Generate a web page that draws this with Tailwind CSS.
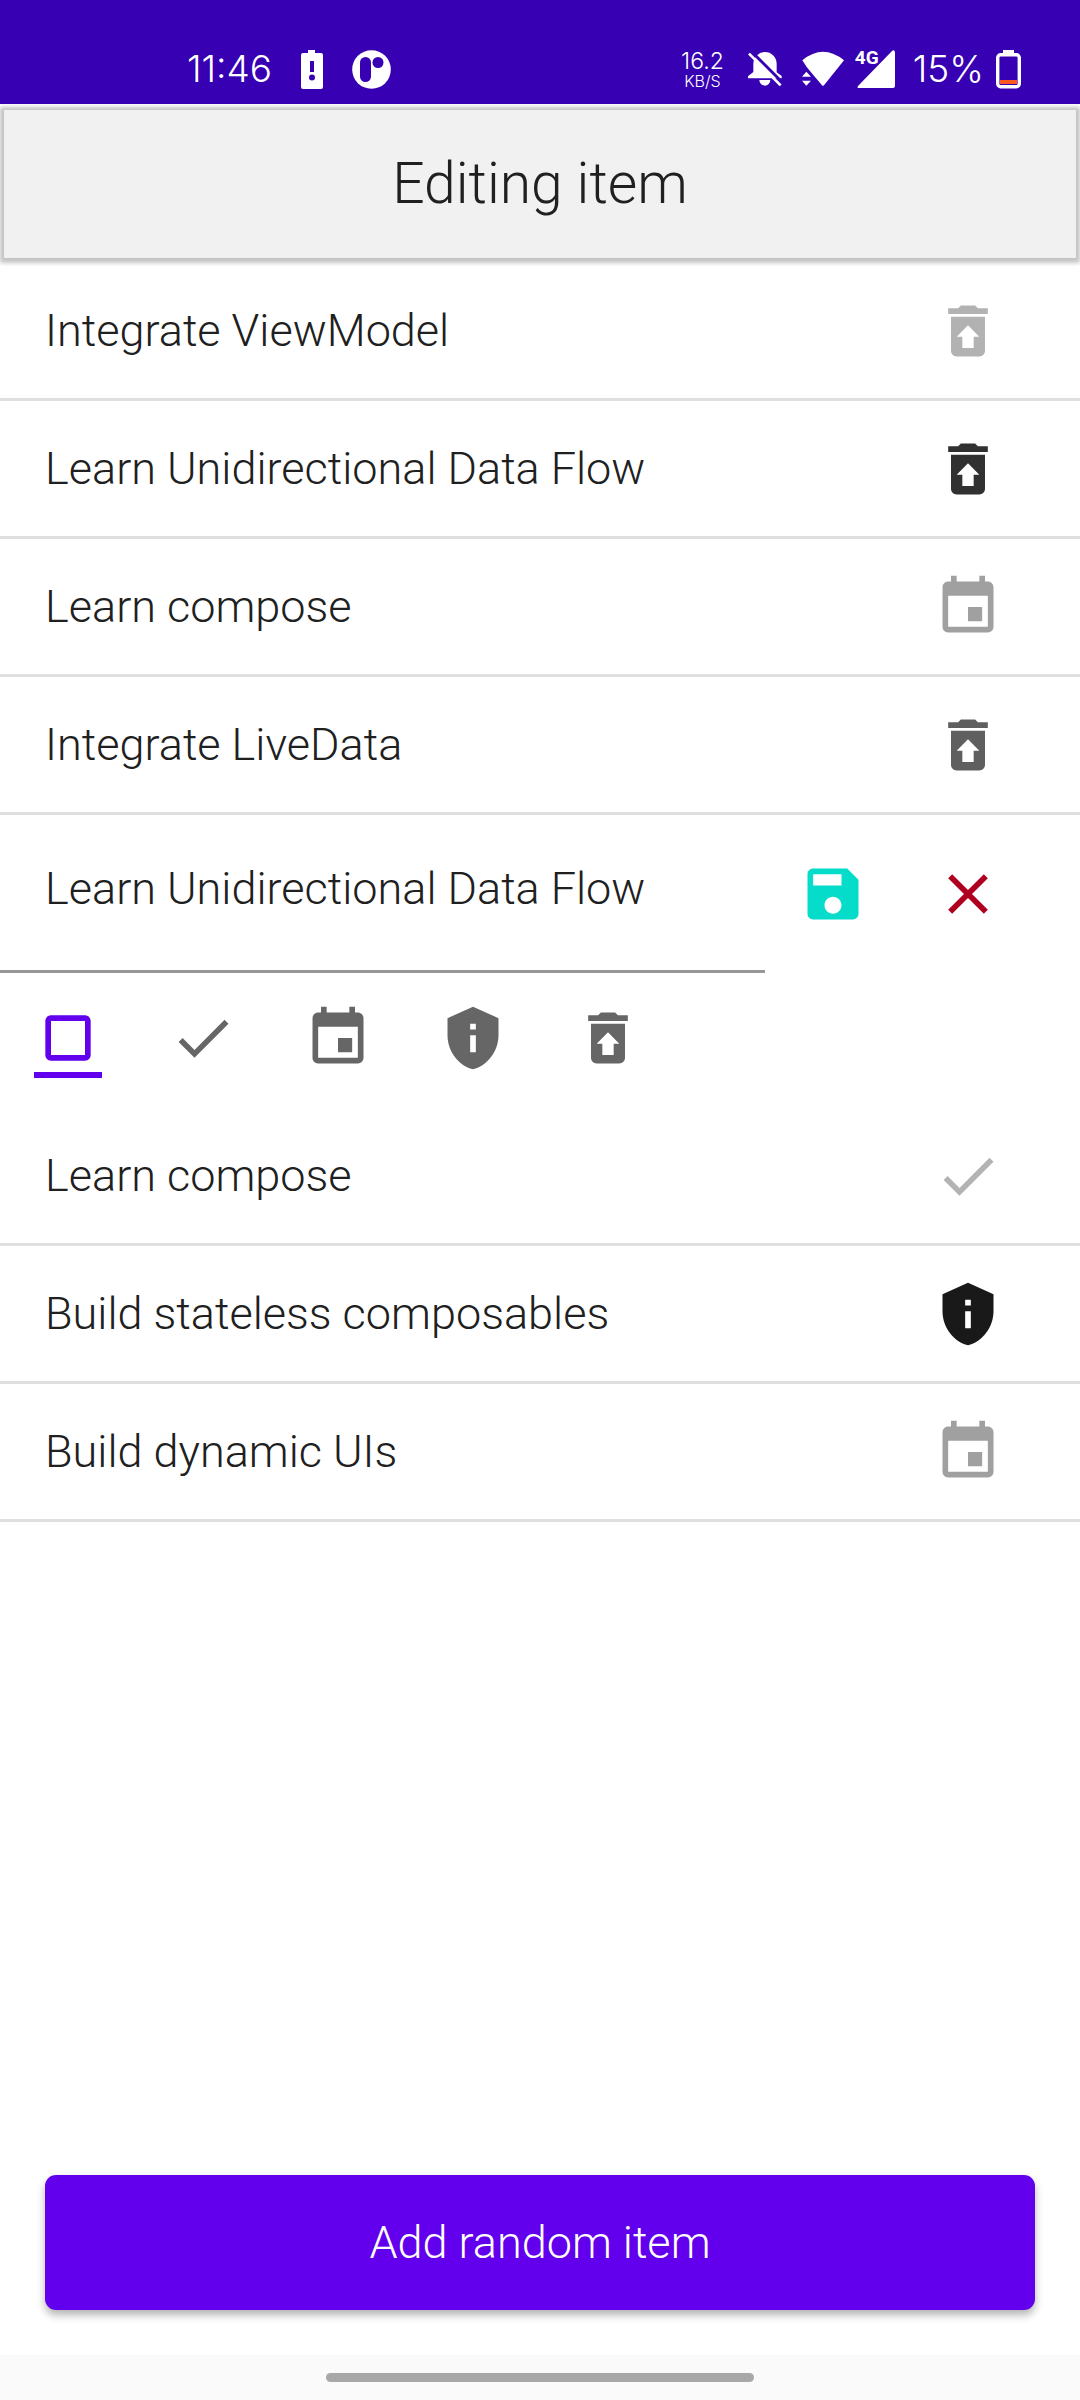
<!DOCTYPE html>
<html lang="en">
<head>
<meta charset="utf-8">
<meta name="viewport" content="width=device-width, initial-scale=1">
<title>Editing item</title>
<script src="https://cdn.jsdelivr.net/npm/@tailwindcss/browser@4"></script>
</head>
<body class="flex min-h-screen flex-col bg-white font-['Roboto',sans-serif] font-light text-[#202020]">

<svg class="hidden" aria-hidden="true">
  <symbol id="restore" viewBox="0 0 24 24"><path d="M19 4h-3.500l-1-1h-5l-1 1H5v2h14zM6 7v12c0 1.100.9 2 2 2h8c1.100 0 2-.9 2-2V7H6zm8 7v4h-4v-4H8l4-4 4 4h-2z"/></symbol>
  <symbol id="event" viewBox="0 0 24 24"><path d="M17 12h-5v5h5v-5zM16 1v2H8V1H6v2H5c-1.110 0-1.990.9-1.990 2L3 19c0 1.100.89 2 2 2h14c1.100 0 2-.9 2-2V5c0-1.100-.9-2-2-2h-1V1h-2zm3 18H5V8h14v11z"/></symbol>
  <symbol id="done" viewBox="0 0 24 24"><path d="M9 16.200L4.800 12l-1.400 1.400L9 19 21 7l-1.400-1.400L9 16.200z"/></symbol>
  <symbol id="privacy" viewBox="0 0 24 24"><path d="M12 1L3 5v6c0 5.550 3.840 10.740 9 12 5.160-1.260 9-6.450 9-12V5l-9-4zm-1 6h2v2h-2V7zm0 4h2v6h-2v-6z"/></symbol>
  <symbol id="square" viewBox="0 0 24 24"><path d="M18 4H6c-1.100 0-2 .9-2 2v12c0 1.100.9 2 2 2h12c1.100 0 2-.9 2-2V6c0-1.100-.9-2-2-2zm0 14H6V6h12v12z"/></symbol>
  <symbol id="save" viewBox="0 0 24 24"><path d="M17 3H5c-1.110 0-2 .9-2 2v14c0 1.100.89 2 2 2h14c1.100 0 2-.9 2-2V7l-4-4zm-5 16c-1.660 0-3-1.340-3-3s1.340-3 3-3 3 1.340 3 3-1.340 3-3 3zm3-10H5V5h10v4z"/></symbol>
  <symbol id="close" viewBox="0 0 24 24"><path d="M19 6.410L17.590 5 12 10.590 6.410 5 5 6.410 10.590 12 5 17.590 6.410 19 12 13.410 17.590 19 19 17.590 13.410 12z"/></symbol>
</svg>

<!-- System status bar -->
<div class="relative z-10 flex h-[104px] shrink-0 items-center justify-between bg-[#3700b3] pt-[34px] pr-[59px] pl-[187px] font-['Inter',sans-serif] text-white">
  <div class="flex items-center gap-[29px]">
    <span class="text-[37px] leading-10">11:46</span>
    <svg class="h-[39px] w-[22px]" viewBox="0 0 22 39" fill="currentColor"><path fill-rule="evenodd" d="M7 0h7v3h6q2 0 2 2v32q0 2-2 2H2q-2 0-2-2V5q0-2 2-2h5zM9 11v11h4V11zM11 24.500a3 3 0 1 0 0 6a3 3 0 1 0 0-6z"/></svg>
    <svg class="h-[39px] w-[39px]" viewBox="0 0 39 39"><circle cx="19.500" cy="19.500" r="19.300" fill="#fff"/><rect x="8" y="7" width="11" height="25" rx="5.500" fill="#3700b3"/><circle cx="26" cy="12.500" r="5.500" fill="#3700b3"/></svg>
  </div>
  <div class="flex items-center">
    <div class="mr-6 flex flex-col items-center">
      <span class="text-[23px] leading-[23px]">16.2</span>
      <span class="text-base leading-4">KB/S</span>
    </div>
    <svg class="mr-5 h-[34px] w-[34px]" viewBox="12 26 102 102">
      <path d="M28 61a35 35 0 0 1 70 0V87L113 98V105H12V99L28 86zM46 110H79a16.500 17 0 0 1-33 0z" fill="#fff"/>
      <path d="M20 22L120 122" stroke="#3700b3" stroke-width="9"/>
      <path d="M15 31L110 126" stroke="#fff" stroke-width="8"/>
    </svg>
    <svg class="mr-[11px] h-[36px] w-[42px]" viewBox="174 22 126 108" fill="#fff"><path d="M175 50Q237-1 300 50L240 125Q237 128 234 125L206 92L188 70z"/><path d="M172 98V88L187 72L208 98L200 138H172z" fill="#3700b3"/><path d="M187 84L201 99H174zM187 126L201 111H174z"/></svg>
    <div class="relative mr-[18px]">
      <svg class="h-[39px] w-[40px]" viewBox="0 0 40 39" fill="#fff"><path d="M3 38Q2 37 3 36L37 1Q40-1 40 3V36Q40 38 38 38z"/></svg>
      <span class="absolute top-0 left-0 font-['Roboto',sans-serif] text-[19px] leading-4 font-bold">4G</span>
    </div>
    <span class="mr-3 text-[37px] leading-10">15%</span>
    <svg class="h-[39px] w-[25px]" viewBox="0 0 25 39"><path d="M7 0h11v5H7z" fill="#fff"/><rect x="1.700" y="4.700" width="21.600" height="32" rx="3" fill="none" stroke="#fff" stroke-width="3.400"/><path d="M4 30h17v4H4z" fill="#ff5722"/></svg>
  </div>
</div>

<header class="px-1 pt-[6px] pb-[5px]">
  <h1 class="bg-[#f1f1f1] py-10 text-center text-[57px] leading-[68px] shadow-[0_1px_4px_4px_#c4c4c4]">Editing item</h1>
</header>

<main class="flex grow flex-col">
  <ul>
    <li class="flex items-center justify-between border-b-[3px] border-[#dfdfdf] pr-[78px] pl-[45px] text-[45px] leading-[135px]">
      <span>Integrate ViewModel</span><svg class="size-[68px] fill-[#b2b2b2]"><use href="#restore"/></svg>
    </li>
    <li class="flex items-center justify-between border-b-[3px] border-[#dfdfdf] pr-[78px] pl-[45px] text-[45px] leading-[135px]">
      <span>Learn Unidirectional Data Flow</span><svg class="size-[68px] fill-[#313131]"><use href="#restore"/></svg>
    </li>
    <li class="flex items-center justify-between border-b-[3px] border-[#dfdfdf] pr-[78px] pl-[45px] text-[45px] leading-[135px]">
      <span>Learn compose</span><svg class="size-[68px] fill-[#a0a0a0]"><use href="#event"/></svg>
    </li>
    <li class="flex items-center justify-between border-b-[3px] border-[#dfdfdf] pr-[78px] pl-[45px] text-[45px] leading-[135px]">
      <span>Integrate LiveData</span><svg class="size-[68px] fill-[#5f5f5f]"><use href="#restore"/></svg>
    </li>

    <!-- Item being edited -->
    <li class="pb-[30px]">
      <div class="flex items-center pr-[45px]">
        <input type="text" aria-label="Item name" value="Learn Unidirectional Data Flow" class="h-[158px] min-w-0 grow border-b-[3px] border-[#979797] pb-2 pl-[45px] text-[45px]">
        <button type="button" aria-label="Save" class="flex w-[135px] shrink-0 justify-center"><svg class="size-[68px] fill-[#05dcc9]"><use href="#save"/></svg></button>
        <button type="button" aria-label="Discard" class="flex w-[135px] shrink-0 justify-center"><svg class="size-[68px] fill-[#b00020]"><use href="#close"/></svg></button>
      </div>
      <div class="flex gap-[67px] px-[34px] pt-[31px]">
        <button type="button" aria-label="Square icon" aria-pressed="true" class="border-b-[6px] border-[#6200ee]"><svg class="size-[68px] fill-[#6200ee]"><use href="#square"/></svg></button>
        <button type="button" aria-label="Done icon" class="border-b-[6px] border-transparent"><svg class="size-[68px] fill-[#666]"><use href="#done"/></svg></button>
        <button type="button" aria-label="Event icon" class="border-b-[6px] border-transparent"><svg class="size-[68px] fill-[#666]"><use href="#event"/></svg></button>
        <button type="button" aria-label="Privacy icon" class="border-b-[6px] border-transparent"><svg class="size-[68px] fill-[#666]"><use href="#privacy"/></svg></button>
        <button type="button" aria-label="Restore icon" class="border-b-[6px] border-transparent"><svg class="size-[68px] fill-[#666]"><use href="#restore"/></svg></button>
      </div>
    </li>

    <li class="flex items-center justify-between border-b-[3px] border-[#dfdfdf] pr-[78px] pl-[45px] text-[45px] leading-[135px]">
      <span>Learn compose</span><svg class="size-[68px] fill-[#b3b3b3]"><use href="#done"/></svg>
    </li>
    <li class="flex items-center justify-between border-b-[3px] border-[#dfdfdf] pr-[78px] pl-[45px] text-[45px] leading-[135px]">
      <span>Build stateless composables</span><svg class="size-[68px] fill-[#191919]"><use href="#privacy"/></svg>
    </li>
    <li class="flex items-center justify-between border-b-[3px] border-[#dfdfdf] pr-[78px] pl-[45px] text-[45px] leading-[135px]">
      <span>Build dynamic UIs</span><svg class="size-[68px] fill-[#a0a0a0]"><use href="#event"/></svg>
    </li>
  </ul>
  <div class="mt-auto flex p-[45px]">
    <button type="button" class="h-[135px] grow rounded-[11px] bg-[#6200ee] text-[45px] text-white shadow-[0_5px_8px_rgba(0,0,0,0.3)]">Add random item</button>
  </div>
</main>

<!-- Gesture navigation bar -->
<div class="flex h-[45px] shrink-0 items-center justify-center bg-[#fafafa]">
  <div class="h-[9px] w-[428px] rounded-full bg-[#a8a8a8]"></div>
</div>
</body>
</html>
